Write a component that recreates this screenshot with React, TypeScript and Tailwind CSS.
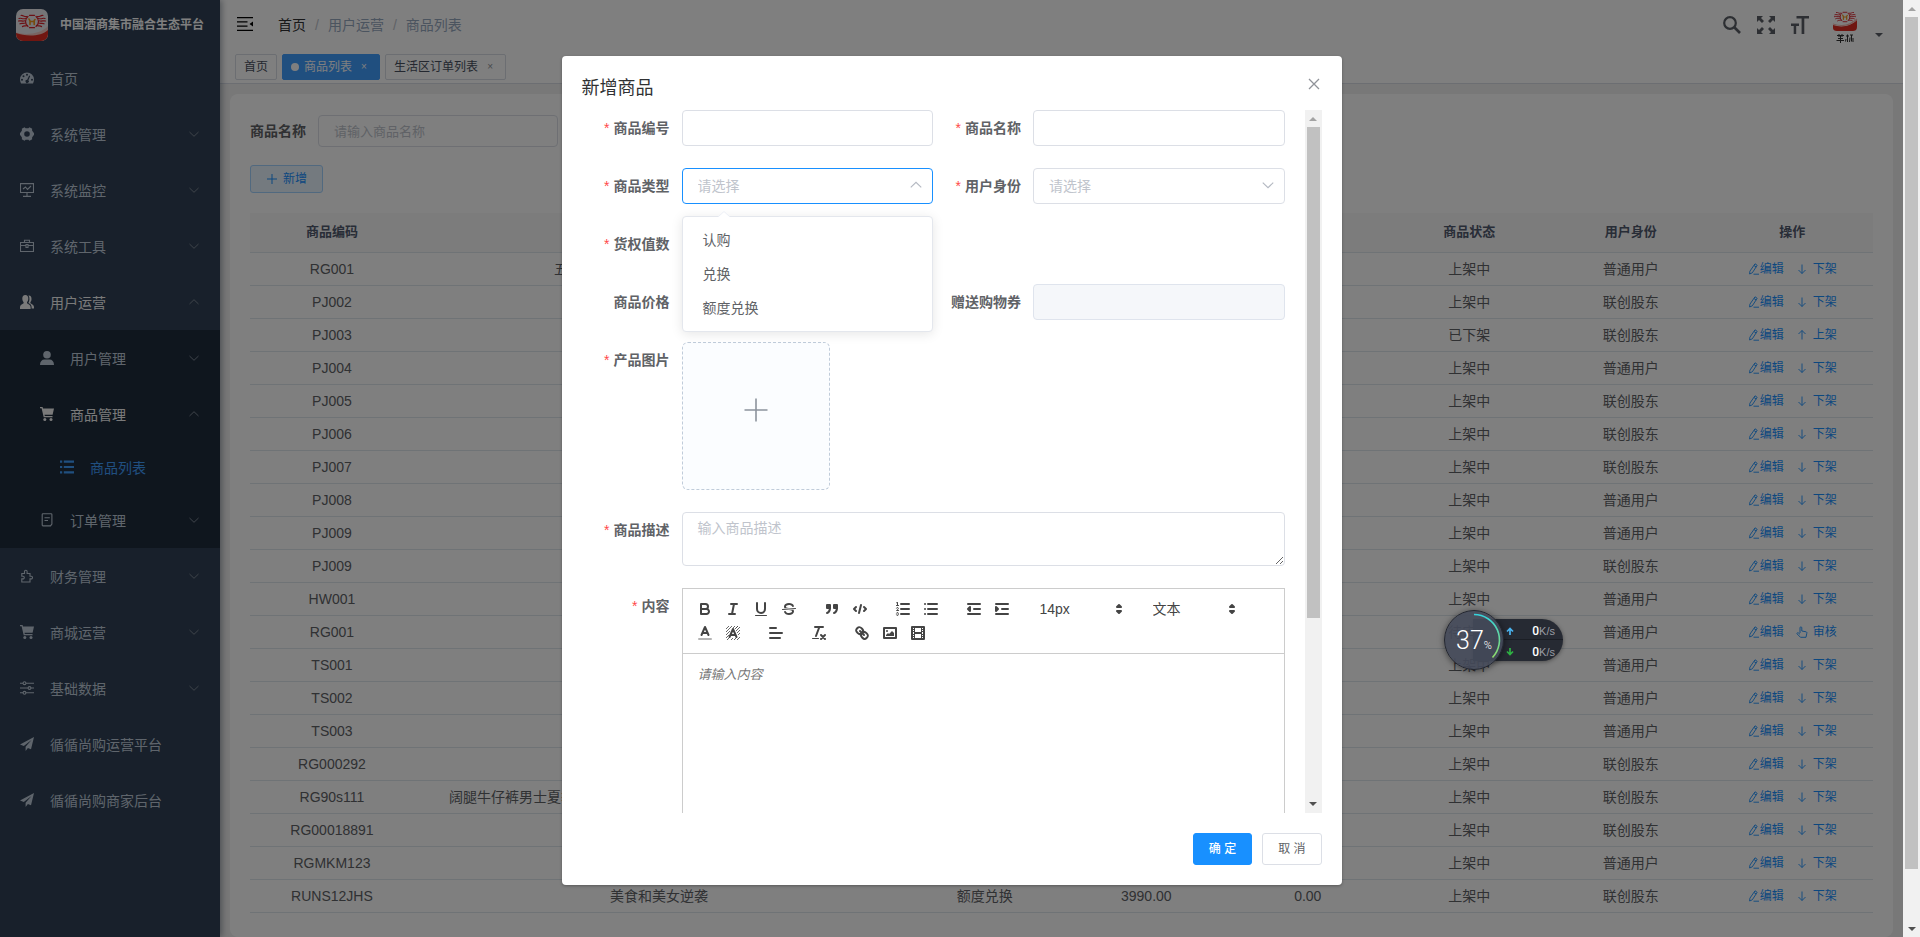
import React from "react";

type IconProps = { className?: string };

/* ---------- drawings ---------- */

function BrandMark({ className = "" }: IconProps) {
  return (
    <svg viewBox="0 0 32 32" className={className} aria-hidden="true">
      <defs>
        <clipPath id="brand-clip">
          <rect width="32" height="32" rx="7" />
        </clipPath>
      </defs>
      <g clipPath="url(#brand-clip)">
        <rect width="32" height="32" fill="#ececf0" />
        <path d="M0 23.500C10 26.500 25 25 32 17V32H0Z" fill="#f3c9c2" />
        <path d="M0 24C9 27.500 25 28 32 21V32H0Z" fill="#e02c22" />
        <BrandCrest />
      </g>
    </svg>
  );
}

function BrandCrest() {
  return (
    <g fill="none" stroke="#d9232b" strokeWidth="1.200" strokeLinecap="round">
      <path d="M11 7.500C8 8.500 7.500 6 5 6.500M9.500 9.500C6 10.500 5.500 8.500 3 9.500M9 11.800C6 12.800 5 11.200 2.500 12M9.500 14C7 15 6 13.800 4 14.800M11.500 16.500C9.500 17.500 8 16.200 6.500 17.500" />
      <path d="M21 7.500C24 8.500 24.500 6 27 6.500M22.500 9.500C26 10.500 26.500 8.500 29 9.500M23 11.800C26 12.800 27 11.200 29.500 12M22.500 14C25 15 26 13.800 28 14.800M20.500 16.500C22.500 17.500 24 16.200 25.500 17.500" />
      <path d="M12 7.500A6.300 6.300 0 0 0 12 17.500M20 7.500A6.300 6.300 0 0 1 20 17.500M13.500 6.300H18.500M13.500 18.700H18.500" />
      <path d="M14 15.500V12L13 10M18.200 15.500V11.500L19 10.500M14 12.500H18.200" stroke="#f0961c" strokeWidth="1.600" />
    </g>
  );
}

function AvatarMark() {
  return (
    <svg viewBox="0 0 40 40" className="size-10" aria-hidden="true">
      <rect width="40" height="40" fill="#fff" />
      <g transform="translate(7.500 2.500) scale(.78 .76)">
        <BrandCrest />
      </g>
      <path d="M8 20C17 23 26 21 32 15V22C32 25 30 26 28 26H12C9.500 26 8 25 8 23Z" fill="#e02c22" />
      <path d="M8 19C17 22 26 20 32 14" stroke="#f3b3ac" strokeWidth="1.200" fill="none" />
      <path d="M12 30.500H19M14 29V32M17 29V32M13 33.500H18M11.500 35.500H19M15.500 31V38M21 31H24M22.500 29.500V37M21 34L20.500 36.500M25 30H28M25 32.500L24.500 37M26.500 30V36.500M28 33V37" stroke="#333" strokeWidth="1" fill="none" />
    </svg>
  );
}

function MenuGlyph({ name }: { name: string }) {
  const line = { fill: "none", stroke: "currentColor", strokeWidth: 1.1 };
  return (
    <svg viewBox="0 0 14 14" className="size-3.5 shrink-0" fill="currentColor" aria-hidden="true">
      {name === "dashboard" && (
        <path
          fillRule="evenodd"
          d="M7 1.500A7 7 0 0 0 0 8.500C0 10 .4 11.300 1 12.500H13C13.600 11.300 14 10 14 8.500A7 7 0 0 0 7 1.500ZM7 2.700A1 1 0 1 1 7 4.700A1 1 0 1 1 7 2.700ZM3.500 4.200A1 1 0 1 1 3.500 6.200A1 1 0 1 1 3.500 4.200ZM2 7.700A1 1 0 1 1 2 9.700A1 1 0 1 1 2 7.700ZM12 7.700A1 1 0 1 1 12 9.700A1 1 0 1 1 12 7.700ZM9.200 4.500L10.200 5L8.400 9.200A1.700 1.700 0 1 1 7.200 8.700Z"
        />
      )}
      {name === "gear" && (
        <path
          fillRule="evenodd"
          d="M4.500 .3L5.600 1.200H8.400L9.500 .3L12.200 1.800L12 3.300L13.300 5.400L14 5.800V8.200L13.300 8.600L12 10.700L12.200 12.200L9.500 13.700L8.400 12.800H5.600L4.500 13.700L1.800 12.200L2 10.700L.7 8.600L0 8.200V5.800L.7 5.400L2 3.300L1.800 1.800ZM7 4.200A2.800 2.800 0 1 0 7 9.800A2.800 2.800 0 1 0 7 4.200Z"
        />
      )}
      {name === "monitor" && (
        <g {...line}>
          <path d="M.5 .6H13.500V9.500H.5ZM7 9.500V13M3 13.400H11M3 6L5.500 4L7.500 6.500L11 3" />
        </g>
      )}
      {name === "toolbox" && (
        <g {...line}>
          <path d="M.5 3.500H13.500V12.500H.5ZM4.500 3.500V1.200H9.500V3.500M.5 6.500H6M8 6.500H13.500M6 5.500H8V8.500H6Z" />
        </g>
      )}
      {name === "people" && (
        <>
          <path d="M5.300 0C7.300 0 8.300 1.400 8.300 3.500C8.300 5.500 7.600 6.500 7 7.200V8.300C8.500 9.200 10.600 10 10.600 12V14H0V12C0 10 2.100 9.200 3.600 8.300V7.200C3 6.500 2.300 5.500 2.300 3.500C2.300 1.400 3.300 0 5.300 0Z" />
          <path d="M8.500 .6C10.700 .4 11.500 2 11.500 4C11.500 5.500 11 6.500 10.400 7.200V8.200C12 9.200 14 10 14 12V13.500H11.600V12C11.600 10 10.300 8.900 8.400 8C9.700 5.800 9.900 2.800 8.500 .6Z" />
        </>
      )}
      {name === "user" && (
        <>
          <circle cx="7" cy="3.800" r="3.800" />
          <path d="M0 14C0 10.500 2 8.600 4.500 8.600H9.500C12 8.600 14 10.500 14 14Z" />
        </>
      )}
      {name === "cart" && (
        <>
          <path d="M0 0H2.600L3 1.600H14L12.600 7.800H4.500L4.800 9H12.500V10.300H3.700L1.600 1.300H0Z" />
          <circle cx="4.800" cy="12.400" r="1.500" />
          <circle cx="11" cy="12.400" r="1.500" />
        </>
      )}
      {name === "list" && (
        <path d="M0 .5H2.200V2.700H0ZM3.800 .5H14V2.700H3.800ZM0 5.900H2.200V8.100H0ZM3.800 5.900H14V8.100H3.800ZM0 11.300H2.200V13.500H0ZM3.800 11.300H14V13.500H3.800Z" />
      )}
      {name === "order" && (
        <g {...line}>
          <path d="M3 .8H11C11.600 .8 11.900 1 11.900 1.600V11L10.500 12.900H3C2.500 12.900 2.200 12.600 2.200 12V1.600C2.200 1.100 2.500 .8 3 .8ZM4.500 4.700H9.800M4.500 7.500H8" />
        </g>
      )}
      {name === "puzzle" && (
        <g {...line}>
          <path d="M1.800 4.500H4.500V2.600A1.300 1.300 0 1 1 7.100 2.600V4.500H10V7.300H11.200A1.300 1.300 0 1 1 11.200 9.900H10V13H1.800V9.900H3A1.300 1.300 0 1 0 3 7.300H1.800Z" />
        </g>
      )}
      {name === "sliders" && (
        <g {...line}>
          <path d="M0 2.200H3M6 2.200H14M0 7H8M11 7H14M0 11.800H3M6 11.800H14" />
          <circle cx="4.500" cy="2.200" r="1.400" />
          <circle cx="9.500" cy="7" r="1.400" />
          <circle cx="4.500" cy="11.800" r="1.400" />
        </g>
      )}
      {name === "plane" && (
        <path d="M14 0L0 7.500L3.800 9L11.500 3L5.600 9.800V14L7.900 11L11 12.300Z" />
      )}
    </svg>
  );
}

function Chevron({ up = false, className = "" }: { up?: boolean; className?: string }) {
  return (
    <svg viewBox="0 0 12 12" className={className} fill="none" stroke="currentColor" strokeWidth="1" aria-hidden="true">
      <path d={up ? "M1.500 8L6 3.700L10.500 8" : "M1.500 4L6 8.300L10.500 4"} />
    </svg>
  );
}

function ScrollTriangle({ up = false, className = "" }: { up?: boolean; className?: string }) {
  return (
    <svg viewBox="0 0 8 4" className={`h-1 w-2 ${className}`} fill="currentColor" aria-hidden="true">
      <path d={up ? "M0 4L4 0L8 4Z" : "M0 0L4 4L8 0Z"} />
    </svg>
  );
}

function ScrollTrack({ share }: { share: "page" | "body" }) {
  return (
    <div className="flex w-[17px] shrink-0 flex-col items-center bg-[#f1f1f1]" aria-hidden="true">
      <div className="flex h-[17px] shrink-0 items-center">
        <ScrollTriangle up className="text-[#a3a3a3]" />
      </div>
      <div className="w-full flex-1 px-0.5">
        <div className={share === "page" ? "h-[94.4%] bg-[#c1c1c1]" : "h-[73.4%] bg-[#c1c1c1]"} />
      </div>
      <div className="flex h-[17px] shrink-0 items-center">
        <ScrollTriangle className="text-[#505050]" />
      </div>
    </div>
  );
}

/* ---------- sidebar ---------- */

type MenuEntry = {
  label: string;
  icon: string;
  level: 1 | 2 | 3;
  arrow?: "up" | "down";
  tone?: "open" | "active";
};

const menuTop: MenuEntry[] = [
  { label: "首页", icon: "dashboard", level: 1 },
  { label: "系统管理", icon: "gear", level: 1, arrow: "down" },
  { label: "系统监控", icon: "monitor", level: 1, arrow: "down" },
  { label: "系统工具", icon: "toolbox", level: 1, arrow: "down" },
  { label: "用户运营", icon: "people", level: 1, arrow: "up", tone: "open" },
];
const menuNested: MenuEntry[] = [
  { label: "用户管理", icon: "user", level: 2, arrow: "down" },
  { label: "商品管理", icon: "cart", level: 2, arrow: "up", tone: "open" },
  { label: "商品列表", icon: "list", level: 3, tone: "active" },
  { label: "订单管理", icon: "order", level: 2, arrow: "down" },
];
const menuBottom: MenuEntry[] = [
  { label: "财务管理", icon: "puzzle", level: 1, arrow: "down" },
  { label: "商城运营", icon: "cart", level: 1, arrow: "down" },
  { label: "基础数据", icon: "sliders", level: 1, arrow: "down" },
  { label: "循循尚购运营平台", icon: "plane", level: 1 },
  { label: "循循尚购商家后台", icon: "plane", level: 1 },
];

const indent = { 1: "h-14 pl-5", 2: "h-14 pl-10", 3: "h-[50px] pl-[60px]" };
const tones = { open: "text-[#f4f4f5]", active: "text-[#409eff]", plain: "text-[#bfcbd9]" };

function MenuRow({ entry }: { entry: MenuEntry }) {
  return (
    <li>
      <a href="#" className={`flex items-center gap-4 pr-5 text-sm ${indent[entry.level]} ${tones[entry.tone ?? "plain"]}`}>
        <MenuGlyph name={entry.icon} />
        <span className="flex-1 pt-0.5">{entry.label}</span>
        {entry.arrow && <Chevron up={entry.arrow === "up"} className="size-3 text-[#7d8794]" />}
      </a>
    </li>
  );
}

function Sidebar() {
  return (
    <aside className="z-10 w-[220px] shrink-0 bg-[#304156] shadow-[2px_0_6px_rgba(0,21,41,0.35)]">
      <a href="#" className="flex h-[50px] items-center gap-3 pl-4">
        <BrandMark className="size-8" />
        <h1 className="text-xs font-bold text-white">中国酒商集市融合生态平台</h1>
      </a>
      <nav>
        <ul>
          {menuTop.map((e) => <MenuRow key={e.label} entry={e} />)}
          <li className="bg-[#1f2d3d]">
            <ul>{menuNested.map((e) => <MenuRow key={e.label} entry={e} />)}</ul>
          </li>
          {menuBottom.map((e) => <MenuRow key={e.label} entry={e} />)}
        </ul>
      </nav>
    </aside>
  );
}

/* ---------- top bar and tabs ---------- */

function TopBar() {
  return (
    <header className="flex h-[50px] shrink-0 items-center bg-white pl-[17px] shadow-[0_1px_4px_rgba(0,21,41,0.08)]">
      <button type="button" aria-label="收起菜单" className="-mt-0.5">
        <svg viewBox="0 0 16 14" className="h-3.5 w-4" aria-hidden="true">
          <path d="M0 0H16V1.300H0ZM0 4.200H10.500V5.500H0ZM0 8.400H10.500V9.700H0ZM0 12.700H16V14H0ZM16 4.500V9.500L12.500 7Z" />
        </svg>
      </button>
      <nav aria-label="面包屑" className="ml-[25px] flex items-center gap-2 text-sm">
        <a href="#" className="text-[#303133]">首页</a>
        <span className="px-px text-[#c0c4cc]">/</span>
        <span className="text-[#97a8be]">用户运营</span>
        <span className="px-px text-[#c0c4cc]">/</span>
        <span className="text-[#97a8be]">商品列表</span>
      </nav>
      <div className="ml-auto flex items-center text-[#5a5e66]">
        <button type="button" aria-label="搜索" className="px-2">
          <svg viewBox="0 0 18 18" className="size-[18px]" fill="none" stroke="currentColor" aria-hidden="true">
            <circle cx="7" cy="7" r="5.800" strokeWidth="2.200" />
            <path d="M11.500 11.500L17 17" strokeWidth="2.600" />
          </svg>
        </button>
        <button type="button" aria-label="全屏" className="px-2">
          <svg viewBox="0 0 18 18" className="size-[18px]" fill="currentColor" aria-hidden="true">
            <path d="M0 0H6L4 2L7 5L5 7L2 4L0 6ZM18 0V6L16 4L13 7L11 5L14 2L12 0ZM0 18V12L2 14L5 11L7 13L4 16L6 18ZM18 18H12L14 16L11 13L13 11L16 14L18 12Z" />
          </svg>
        </button>
        <button type="button" aria-label="字号" className="px-2">
          <svg viewBox="0 0 18 18" className="size-[18px]" fill="currentColor" aria-hidden="true">
            <path d="M5.500 0H18V2.600H13.300V18H10.600V2.600H5.500ZM0 7.500H8V10H5.200V18H2.700V10H0Z" />
          </svg>
        </button>
        <button type="button" aria-label="用户菜单" className="ml-2 flex items-center gap-2.5 pr-5">
          <AvatarMark />
          <ScrollTriangle className="mt-5" />
        </button>
      </div>
    </header>
  );
}

function TagBar() {
  const base = "flex h-[26px] items-center rounded-[2px] border text-xs";
  return (
    <nav aria-label="标签页" className="flex h-[34px] shrink-0 items-start gap-[5px] border-b border-[#d8dce5] bg-white pt-1 pl-[15px]">
      <a href="#" className={`${base} border-[#d8dce5] px-2 text-[#495060]`}>首页</a>
      <a href="#" className={`${base} gap-[5px] border-[#409eff] bg-[#409eff] px-2 text-white`}>
        <span className="size-2 rounded-full bg-white" />
        商品列表
        <span className="w-3.5 text-center text-[10px]">×</span>
      </a>
      <a href="#" className={`${base} gap-[5px] border-[#d8dce5] px-2 text-[#495060]`}>
        生活区订单列表
        <span className="w-3.5 text-center text-[10px] text-[#909399]">×</span>
      </a>
    </nav>
  );
}

/* ---------- product table ---------- */

type Row = {
  code: string;
  state: "上架中" | "已下架" | "待审核";
  role: "普通用户" | "联创股东";
  name?: string;
  kind?: string;
  price?: string;
  coupon?: string;
};

const rows: Row[] = [
  { code: "RG001", state: "上架中", role: "普通用户", name: "五粮液集团浓香型白酒礼盒装一件" },
  { code: "PJ002", state: "上架中", role: "联创股东" },
  { code: "PJ003", state: "已下架", role: "联创股东" },
  { code: "PJ004", state: "上架中", role: "普通用户" },
  { code: "PJ005", state: "上架中", role: "联创股东" },
  { code: "PJ006", state: "上架中", role: "联创股东" },
  { code: "PJ007", state: "上架中", role: "联创股东" },
  { code: "PJ008", state: "上架中", role: "普通用户" },
  { code: "PJ009", state: "上架中", role: "普通用户" },
  { code: "PJ009", state: "上架中", role: "联创股东" },
  { code: "HW001", state: "上架中", role: "普通用户" },
  { code: "RG001", state: "待审核", role: "普通用户" },
  { code: "TS001", state: "上架中", role: "普通用户" },
  { code: "TS002", state: "上架中", role: "普通用户" },
  { code: "TS003", state: "上架中", role: "普通用户" },
  { code: "RG000292", state: "上架中", role: "联创股东" },
  { code: "RG90s111", state: "上架中", role: "联创股东", name: "阔腿牛仔裤男士夏季薄款冰丝透气宽松直筒休闲长裤百搭潮流垂感裤" },
  { code: "RG00018891", state: "上架中", role: "联创股东" },
  { code: "RGMKM123", state: "上架中", role: "普通用户" },
  { code: "RUNS12JHS", state: "上架中", role: "联创股东", name: "美食和美女逆袭", kind: "额度兑换", price: "3990.00", coupon: "0.00" },
];

const actionFor = { 上架中: "下架", 已下架: "上架", 待审核: "审核" } as const;

function EditGlyph() {
  return (
    <svg viewBox="0 0 12 12" className="size-3" fill="none" stroke="currentColor" strokeWidth="0.900" aria-hidden="true">
      <path d="M7 .8L9.200 2.300L4.300 9.800L1.600 11L1.900 8.200ZM6 2.500L8.200 4M5.500 11.200H11" />
    </svg>
  );
}

function ActionGlyph({ action }: { action: string }) {
  return (
    <svg viewBox="0 0 12 12" className="size-3" fill="none" stroke="currentColor" strokeWidth="0.900" aria-hidden="true">
      {action === "下架" && <path d="M6 1.500V10.500M2.500 7L6 10.500L9.500 7" />}
      {action === "上架" && <path d="M6 10.500V1.500M2.500 5L6 1.500L9.500 5" />}
      {action === "审核" && (
        <path d="M4 7V1.800A.9 .9 0 0 1 5.800 1.800V5L10 5.800C10.800 6 11 6.500 10.800 7.300L10 11.300H4.500L1 7.800C.8 7 1.500 6.500 2.200 6.800L4 8.300" />
      )}
    </svg>
  );
}

function ProductTable() {
  const heads = ["商品编码", "商品名称", "商品类型", "商品价格", "赠送购物券", "商品状态", "用户身份", "操作"];
  const cell = "h-[33px] border-b border-[#dfe6ec] px-2.5 py-0 whitespace-nowrap";
  return (
    <table className="w-full table-fixed border-separate border-spacing-0 text-center text-sm text-[#606266]">
      <colgroup>
        <col className="w-[10.1%]" />
        <col className="w-[30.2%]" />
        <col />
        <col />
        <col />
        <col />
        <col />
        <col />
      </colgroup>
      <thead>
        <tr>
          {heads.map((h) => (
            <th key={h} scope="col" className="h-10 border-b border-[#dfe6ec] bg-[#f8f8f9] p-0 text-[13px] font-bold text-[#515a6e]">{h}</th>
          ))}
        </tr>
      </thead>
      <tbody>
        {rows.map(({ code, name, kind, price, coupon, state, role }, i) => (
          <tr key={i}>
            <td className={cell}>{code}</td>
            <td className={cell}>{name}</td>
            <td className={cell}>{kind}</td>
            <td className={cell}>{price}</td>
            <td className={cell}>{coupon}</td>
            <td className={cell}>{state}</td>
            <td className={cell}>{role}</td>
            <td className={cell}>
              <div className="flex items-center justify-center gap-3 text-xs text-[#1890ff]">
                <button type="button" className="flex items-center"><EditGlyph />编辑</button>
                <button type="button" className="flex items-center gap-[5px]">
                  <ActionGlyph action={actionFor[state]} />
                  {actionFor[state]}
                </button>
              </div>
            </td>
          </tr>
        ))}
      </tbody>
    </table>
  );
}

/* ---------- dialog ---------- */

function Field({ label, id, required = false, wide = false, children }: {
  label: string; id: string; required?: boolean; wide?: boolean; children?: React.ReactNode;
}) {
  return (
    <div className={`flex items-start ${wide ? "col-span-2" : ""}`}>
      <label htmlFor={id} className="w-[100px] shrink-0 pr-3 text-right text-sm leading-9 font-bold whitespace-nowrap text-[#606266]">
        {required && <span className="mr-1 font-normal text-[#ff4949]">*</span>}
        {label}
      </label>
      <div className="relative min-w-0 flex-1">{children}</div>
    </div>
  );
}

const control = "block h-9 w-full rounded border bg-white px-[15px] text-sm outline-none";

function Picker({ id, open = false }: { id: string; open?: boolean }) {
  return (
    <>
      <select
        id={id}
        defaultValue=""
        className={`${control} appearance-none text-[#c0c4cc] ${open ? "border-[#1890ff]" : "border-[#dcdfe6]"}`}
      >
        <option value="">请选择</option>
      </select>
      <Chevron up={open} className="pointer-events-none absolute top-2.5 right-2.5 size-3.5 text-[#b4b9c2]" />
    </>
  );
}

function OptionPanel() {
  return (
    <ul role="listbox" aria-label="商品类型" className="absolute top-12 left-0 z-20 w-full rounded border border-[#e4e7ed] bg-white py-1.5 text-sm text-[#606266] shadow-[0_2px_12px_rgba(0,0,0,0.1)]">
      <li role="presentation" className="absolute -top-[6px] left-[35px]">
        <svg viewBox="0 0 12 7" className="block h-[7px] w-3" aria-hidden="true">
          <path d="M0 6L6 0L12 6V7H0Z" fill="#fff" />
          <path d="M0 6L6 .5L12 6" fill="none" stroke="#ebeef5" />
        </svg>
      </li>
      {["认购", "兑换", "额度兑换"].map((o) => (
        <li key={o} role="option" aria-selected="false" className="px-5 leading-[34px]">{o}</li>
      ))}
    </ul>
  );
}

const F = { fill: "#444", stroke: "none" };
const H = { strokeWidth: 1 };
const editorIcons: Record<string, React.ReactNode> = {
  加粗: <><path d="M5,4H9.5A2.5,2.5,0,0,1,12,6.5v0A2.5,2.5,0,0,1,9.500,9H5V4Z" /><path d="M5,9h5.5A2.5,2.5,0,0,1,13,11.5v0A2.5,2.5,0,0,1,10.5,14H5V9Z" /></>,
  斜体: <path d="M7 4H13M5 14H11M8 14L10 4" />,
  下划线: <><path d="M5,3V9a4.012,4.012,0,0,0,4,4H9a4.012,4.012,0,0,0,4-4V3" /><rect {...F} height="1" rx="0.5" width="12" x="3" y="15" /></>,
  删除线: <><path {...H} d="M15.500 8.500L2.500 9.500" /><path {...F} d="M9.007,8C6.542,7.791,6,7.519,6,6.5,6,5.792,7.283,5,9,5c1.571,0,2.765.679,2.969,1.309a1,1,0,0,0,1.9-.617C13.356,4.106,11.354,3,9,3,6.2,3,4,4.538,4,6.5a3.2,3.2,0,0,0,.5,1.843Z" /><path {...F} d="M8.984,10C11.457,10.208,12,10.479,12,11.5c0,0.708-1.283,1.5-3,1.5-1.571,0-2.765-.679-2.969-1.309a1,1,0,1,0-1.9.617C4.644,13.894,6.646,15,9,15c2.8,0,5-1.538,5-3.5a3.2,3.2,0,0,0-.5-1.843Z" /></>,
  引用: <g fill="#444"><rect height="3" width="3" x="4" y="5" /><rect height="3" width="3" x="11" y="5" /><path d="M7,8c0,4.031-3,5-3,5M14,8c0,4.031-3,5-3,5" /></g>,
  代码: <path d="M5 7L3 9L5 11M13 7L15 9L13 11M10 5L8 13" />,
  有序列表: <><path d="M7 4H15M7 9H15M7 14H15" /><path {...H} d="M2.500 5.500H4.500M4.500,10.500h-2c0-.234,1.850-1.076,1.850-2.234A0.959,0.959,0,0,0,2.500,8.156M2.500,14.846a0.959,0.959,0,0,0,1.850-.109A0.7,0.7,0,0,0,3.750,14a0.688,0.688,0,0,0,.6-0.736,0.959,0.959,0,0,0-1.850-.109" /><path {...F} d="M3.500,6A0.500,0.500,0,0,1,3,5.500V3.085l-0.276.138A0.500,0.500,0,0,1,2.053,3c-0.124-.247-0.023-0.324.224-0.447l1-.5A0.500,0.500,0,0,1,4,2.500v3A0.500,0.500,0,0,1,3.500,6Z" /></>,
  无序列表: <path d="M6 4H15M6 9H15M6 14H15M3 4H3.010M3 9H3.010M3 14H3.010" />,
  减少缩进: <path fill="#444" d="M3 14H15M3 4H15M9 9H15M5 7V11L3 9Z" />,
  增加缩进: <path fill="#444" d="M3 14H15M3 4H15M9 9H15M3 7V11L5 9Z" />,
  文字颜色: <><path opacity=".4" d="M3 15H15" /><path d="M5.500 11L9 3L12.500 11M11.630 9H6.380" /></>,
  背景颜色: <><path strokeWidth=".8" strokeLinecap="butt" d="M2 5L5 2M2 8L8 2M2 11L6 7M9 4L11 2M2 14L5 11M12 4L14 2M3 16L6 13M11 5L14 2M12 7L16 3M13 9L16 6M14 11L16 9M7 16L9 14M10 16L12 14M13 16L16 13" /><path d="M5.500 13L9 5L12.500 13M11.630 11H6.380" /></>,
  对齐: <path d="M3 9H15M3 14H13M3 4H9" />,
  清除格式: <><path d="M5 3H13M6 12L9.350 3M11 11L15 15M15 11L11 15" /><rect {...F} height="1" rx="0.5" width="7" x="2" y="14" /></>,
  链接: <><path d="M7 7L11 11" /><path d="M8.900,4.577a3.476,3.476,0,0,1,.36,4.679A3.476,3.476,0,0,1,4.577,8.900C3.185,7.500,2.035,6.400,4.217,4.217S7.500,3.185,8.900,4.577Z" /><path d="M13.423,9.100a3.476,3.476,0,0,0-4.679-.36,3.476,3.476,0,0,0,.36,4.679c1.392,1.392,2.500,2.542,4.679.36S14.815,10.500,13.423,9.100Z" /></>,
  图片: <><rect height="10" width="12" x="3" y="4" /><circle {...F} cx="6" cy="7" r="1" /><polyline {...F} points="5 12 5 11 7 9 8 10 11 7 13 9 13 12 5 12" /></>,
  视频: <><rect height="12" width="12" x="3" y="3" /><path {...F} d="M5 3H6V15H5ZM12 3H13V15H12ZM5 8H13V10H5ZM3 5H6V6H3ZM3 7H6V8H3ZM3 10H6V11H3ZM3 12H6V13H3ZM12 5H15V6H12ZM12 7H15V8H12ZM12 10H15V11H12ZM12 12H15V13H12Z" /></>,
};

function ToolGroup({ names }: { names: string[] }) {
  return (
    <div className="mr-[15px] flex">
      {names.map((n) => (
        <button key={n} type="button" aria-label={n} className="h-6 w-7 px-[5px] py-[3px]">
          <svg viewBox="0 0 18 18" className="size-[18px]" fill="none" stroke="#444" strokeWidth="2" strokeLinecap="round" strokeLinejoin="round">
            {editorIcons[n]}
          </svg>
        </button>
      ))}
    </div>
  );
}

function ToolPicker({ label, value }: { label: string; value: string }) {
  return (
    <div className="relative mr-[15px] h-6 w-[98px]">
      <select aria-label={label} className="block h-6 w-full appearance-none bg-transparent pl-[9px] text-sm text-[#444] outline-none">
        <option>{value}</option>
      </select>
      <svg viewBox="0 0 18 18" className="pointer-events-none absolute top-[3px] right-px size-[18px]" fill="#444" stroke="#444" strokeWidth="2" strokeLinejoin="round" aria-hidden="true">
        <path d="M7 11L9 13L11 11ZM7 7L9 5L11 7Z" />
      </svg>
    </div>
  );
}

function Editor() {
  return (
    <div className="border border-[#ccc] text-[#444]">
      <div className="flex flex-wrap border-b border-[#ccc] p-2">
        <ToolGroup names={["加粗", "斜体", "下划线", "删除线"]} />
        <ToolGroup names={["引用", "代码"]} />
        <ToolGroup names={["有序列表", "无序列表"]} />
        <ToolGroup names={["减少缩进", "增加缩进"]} />
        <ToolPicker label="字号" value="14px" />
        <ToolPicker label="标题" value="文本" />
        <ToolGroup names={["文字颜色", "背景颜色"]} />
        <ToolGroup names={["对齐"]} />
        <ToolGroup names={["清除格式"]} />
        <ToolGroup names={["链接", "图片", "视频"]} />
      </div>
      <textarea
        id="content"
        placeholder="请输入内容"
        className="block h-80 w-full resize-none px-[15px] py-3 text-[13px] leading-[18px] outline-none placeholder:text-[#777] placeholder:italic"
      />
    </div>
  );
}

function ProductDialog() {
  return (
    <div role="dialog" aria-modal="true" aria-labelledby="dialog-title" className="mt-14 h-fit w-full max-w-[780px] rounded-[4px] bg-white shadow-[0_1px_3px_rgba(0,0,0,0.3)]">
      <div className="flex items-start justify-between px-5 pt-5 pb-2.5">
        <h2 id="dialog-title" className="text-lg leading-6 text-[#303133]">新增商品</h2>
        <button type="button" aria-label="关闭" className="text-[#909399]">
          <svg viewBox="0 0 16 16" className="size-4" stroke="currentColor" strokeWidth="1.300" aria-hidden="true">
            <path d="M3 3L13 13M13 3L3 13" />
          </svg>
        </button>
      </div>
      <div className="mx-5 flex h-[75vh] overflow-hidden">
        <form className="grid h-fit flex-1 grid-cols-2 gap-y-[22px] pr-5">
          <Field label="商品编号" id="code" required>
            <input id="code" type="text" className={`${control} border-[#dcdfe6]`} />
          </Field>
          <Field label="商品名称" id="name" required>
            <input id="name" type="text" className={`${control} border-[#dcdfe6]`} />
          </Field>
          <Field label="商品类型" id="kind" required>
            <Picker id="kind" open />
            <OptionPanel />
          </Field>
          <Field label="用户身份" id="role" required>
            <Picker id="role" />
          </Field>
          <Field label="货权值数" id="right" required wide>
            <input id="right" type="text" className="block h-9 w-1/4 outline-none" />
          </Field>
          <Field label="商品价格" id="price">
            <input id="price" type="text" className="block h-9 w-1/2 outline-none" />
          </Field>
          <Field label="赠送购物券" id="coupon">
            <input id="coupon" type="text" disabled className="block h-9 w-full rounded border border-[#dfe4ed] bg-[#f5f7fa] px-[15px]" />
          </Field>
          <Field label="产品图片" id="photo" required wide>
            <button id="photo" type="button" aria-label="上传图片" className="flex size-[148px] items-center justify-center rounded-md border border-dashed border-[#c0ccda] bg-[#fbfdff]">
              <svg viewBox="0 0 28 28" className="-mt-3 size-7" stroke="#8c939d" strokeWidth="1.600" aria-hidden="true">
                <path d="M14 2.500V25.500M2.500 14H25.500" />
              </svg>
            </button>
          </Field>
          <Field label="商品描述" id="desc" required wide>
            <textarea id="desc" placeholder="输入商品描述" className="block h-[54px] w-full rounded border border-[#dcdfe6] px-[15px] py-[5px] text-sm leading-[21px] outline-none placeholder:text-[#c0c4cc]" />
          </Field>
          <Field label="内容" id="content" required wide>
            <Editor />
          </Field>
        </form>
        <ScrollTrack share="body" />
      </div>
      <div className="flex justify-end gap-2.5 p-5 text-xs">
        <button type="button" className="h-8 rounded-[3px] border border-[#1890ff] bg-[#1890ff] px-[15px] font-medium text-white">确 定</button>
        <button type="button" className="h-8 rounded-[3px] border border-[#dcdfe6] bg-white px-[15px] text-[#606266]">取 消</button>
      </div>
    </div>
  );
}

/* ---------- floating system monitor ---------- */

function SpeedLine({ up }: { up: boolean }) {
  return (
    <div className="flex h-5 items-center pt-1 pr-2 pl-[33px] text-xs">
      <svg viewBox="0 0 8 8" className={up ? "size-2 text-[#4ab4f0]" : "size-2 text-[#2fb344]"} fill="none" stroke="currentColor" strokeWidth="1.700" aria-hidden="true">
        <path d={up ? "M4 8V1.500M1 4.500L4 1.500L7 4.500" : "M4 0V6.500M1 3.500L4 6.500L7 3.500"} />
      </svg>
      <span className="ml-auto font-[Roboto] font-medium text-white">0</span>
      <span className="text-[11px] text-[#9a9da5]">K/s</span>
    </div>
  );
}

function SpeedWidget() {
  return (
    <div className="absolute top-[610px] right-[340px] flex h-[60px] w-[119px] items-center">
      <div className="absolute right-0 h-[42px] w-[90px] rounded-r-full bg-[#262a33] shadow-[0_1px_4px_rgba(0,0,0,0.4)]">
        <SpeedLine up />
        <div className="border-t border-[#1b1e25]" />
        <SpeedLine up={false} />
      </div>
      <div className="relative flex size-[60px] items-center justify-center rounded-full border border-[#23262f] bg-[#454a5a]/90 shadow-[0_1px_6px_rgba(0,0,0,0.5)]">
        <svg viewBox="0 0 60 60" className="absolute -inset-px size-[60px]" fill="none" aria-hidden="true">
          <defs>
            <linearGradient id="load-arc" x1="0" y1="0" x2="0" y2="1">
              <stop offset="0" stopColor="#35d3dc" />
              <stop offset="1" stopColor="#8fdc6a" />
            </linearGradient>
          </defs>
          <path d="M30 4.500A25.500 25.500 0 0 1 48.500 47.500" stroke="url(#load-arc)" strokeWidth="1.600" />
        </svg>
        <p className="flex items-baseline leading-none text-white">
          <span className="font-[Roboto] text-[25px] font-light">37</span>
          <span className="font-[Roboto] text-[11px] font-light">%</span>
        </p>
      </div>
    </div>
  );
}

/* ---------- page ---------- */

export default function App() {
  return (
    <div className="flex h-screen overflow-hidden bg-white font-['Liberation_Sans','Noto_Sans_CJK_SC',sans-serif]">
      <div className="relative flex min-w-0 flex-1 overflow-hidden">
        <Sidebar />
        <main className="flex min-w-0 flex-1 flex-col bg-[#f0f0f0]">
          <TopBar />
          <TagBar />
          <section className="mx-2.5 mt-2.5 flex-1 rounded-lg bg-white px-5 pt-[21px]">
            <form className="mb-[18px] flex items-center gap-3">
              <label htmlFor="query" className="text-sm font-bold text-[#606266]">商品名称</label>
              <input id="query" type="text" placeholder="请输入商品名称" className="h-8 w-60 rounded border border-[#dcdfe6] px-[15px] text-[13px] outline-none placeholder:text-[#c0c4cc]" />
            </form>
            <button type="button" className="mb-5 flex h-7 items-center gap-[5px] rounded-[3px] border border-[#a3d3ff] bg-[#e8f4ff] px-[15px] text-xs text-[#1890ff]">
              <svg viewBox="0 0 12 12" className="size-3" stroke="currentColor" aria-hidden="true">
                <path d="M6 1V11M1 6H11" />
              </svg>
              新增
            </button>
            <ProductTable />
          </section>
        </main>
        <div className="absolute inset-0 z-20 flex justify-center bg-black/50">
          <ProductDialog />
        </div>
        <div className="pointer-events-none absolute inset-0 z-30">
          <SpeedWidget />
        </div>
      </div>
      <ScrollTrack share="page" />
    </div>
  );
}
